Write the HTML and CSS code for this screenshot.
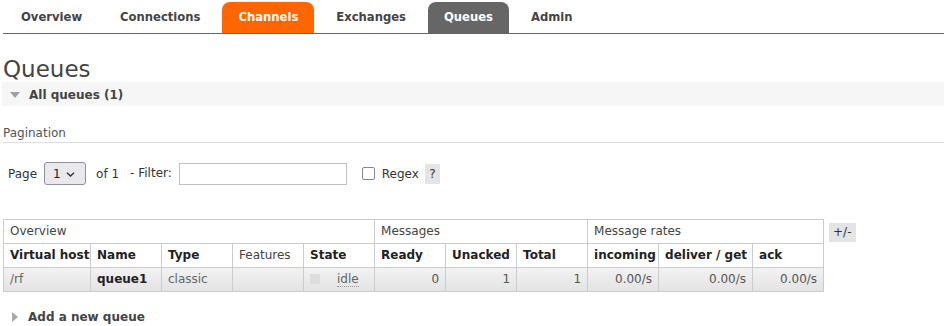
FILE: index.html
```html
<!DOCTYPE html>
<html lang="en">
<head>
    <meta charset="UTF-8">
    <meta name="viewport" content="width=device-width, initial-scale=1.0">
    <title>Queues</title>
    <link rel="stylesheet" href="styles.css">
</head>
<body>
    <ul class="menu">
        <li><a href="#">Overview</a></li>
        <li><a href="#">Connections</a></li>
        <li><a href="#" class="hovered">Channels</a></li>
        <li><a href="#">Exchanges</a></li>
        <li><a href="#" class="selected">Queues</a></li>
        <li><a href="#">Admin</a></li>
    </ul>

    <main class="main">
        <h1>Queues</h1>

        <section class="section">
            <h2 class="section-head"><span class="arrow-down"></span>All queues (1)</h2>

            <h3 class="sub-head">Pagination</h3>
            <form class="filter-row">
                <label class="page-label" for="page">Page</label>
                <span class="select-wrap">
                    <select id="page" class="page-select">
                        <option>1</option>
                    </select>
                    <svg class="chevron" width="9" height="5" viewBox="0 0 9 5">
                        <path d="M1 0.8 L4.5 4 L8 0.8" fill="none" stroke="#333" stroke-width="1.4"/>
                    </svg>
                </span>
                <span class="of-label">of 1</span>
                <label class="filter-label" for="filter">- Filter:</label>
                <input type="text" id="filter" class="filter-input">
                <input type="checkbox" id="regex" class="regex-box">
                <label class="regex-label" for="regex">Regex</label>
                <span class="help">?</span>
            </form>

            <div class="table-wrap">
                <table class="list">
                    <colgroup>
                        <col class="w-vhost">
                        <col class="w-std">
                        <col class="w-std">
                        <col class="w-std">
                        <col class="w-std">
                        <col class="w-std">
                        <col class="w-std">
                        <col class="w-std">
                        <col class="w-std">
                        <col class="w-wide">
                        <col class="w-std">
                    </colgroup>
                    <thead>
                        <tr class="group-row">
                            <th colspan="5">Overview</th>
                            <th colspan="3">Messages</th>
                            <th colspan="3">Message rates</th>
                        </tr>
                        <tr>
                            <th>Virtual host</th>
                            <th>Name</th>
                            <th>Type</th>
                            <th class="plain">Features</th>
                            <th>State</th>
                            <th>Ready</th>
                            <th>Unacked</th>
                            <th>Total</th>
                            <th>incoming</th>
                            <th>deliver / get</th>
                            <th>ack</th>
                        </tr>
                    </thead>
                    <tbody>
                        <tr>
                            <td>/rf</td>
                            <td class="name">queue1</td>
                            <td>classic</td>
                            <td></td>
                            <td><span class="state-dot"></span><abbr class="state">idle</abbr></td>
                            <td class="num">0</td>
                            <td class="num">1</td>
                            <td class="num">1</td>
                            <td class="num">0.00/s</td>
                            <td class="num">0.00/s</td>
                            <td class="num">0.00/s</td>
                        </tr>
                    </tbody>
                </table>
                <span class="toggle">+/-</span>
            </div>
        </section>

        <h2 class="section-closed"><span class="arrow-right"></span>Add a new queue</h2>
    </main>
</body>
</html>
```

FILE: styles.css
```css
* {
    box-sizing: border-box;
}

body {
    margin: 0;
    font-family: "DejaVu Sans", Verdana, sans-serif;
    font-size: 12px;
    color: #484848;
}

/* top tabs */
.menu {
    display: flex;
    gap: 6px;
    list-style: none;
    margin: 0 0 0 3px;
    padding: 2px 0 0 2px;
    border-bottom: 1px solid #666;
}

.menu a {
    display: block;
    padding: 0 16px;
    line-height: 31px;
    font-size: 11.6px;
    font-weight: bold;
    color: #444;
    text-decoration: none;
    border-radius: 8px 8px 0 0;
}

.menu a.hovered {
    background-color: #f60;
    color: #fff;
}

.menu a.selected {
    background-color: #666;
    color: #fff;
}

.main {
    padding-left: 3px;
}

h1 {
    margin: 22px 0 0 0;
    font-size: 23px;
    line-height: 26px;
    font-weight: normal;
    color: #444;
}

.section-head {
    display: flex;
    align-items: center;
    margin: 0 0 0 -1px;
    padding-top: 1px;
    height: 24px;
    font-size: 12px;
    font-weight: bold;
    color: #444;
    background-color: #f6f6f6;
}

.arrow-down {
    width: 0;
    height: 0;
    margin: 0 9px 0 8px;
    border-left: 5.5px solid transparent;
    border-right: 5.5px solid transparent;
    border-top: 6px solid #a0a0a0;
}

.sub-head {
    margin: 20px 0 0 0;
    padding-bottom: 2px;
    font-size: 12px;
    line-height: 14px;
    font-weight: normal;
    color: #555;
    border-bottom: 1px solid #ddd;
}

/* pagination / filter row */
.filter-row {
    display: flex;
    align-items: center;
    margin: 19px 0 0 5px;
    height: 23px;
    color: #333;
}

.select-wrap {
    position: relative;
    margin-left: 7px;
}

.page-select {
    appearance: none;
    display: block;
    width: 42px;
    height: 23px;
    padding: 0 0 0 8px;
    font-family: inherit;
    font-size: 12px;
    color: #222;
    background-color: #e9e9ed;
    border: 1px solid #8f8f9d;
    border-radius: 3px;
}

.chevron {
    position: absolute;
    left: 22px;
    top: 10px;
    pointer-events: none;
}

.of-label {
    margin-left: 10px;
}

.filter-label {
    margin: -2px 0 0 11px;
}

.filter-input {
    width: 168px;
    height: 22px;
    margin: 0 0 0 7px;
    border: 1px solid #c0c0c0;
    font-family: inherit;
    font-size: 12px;
}

.regex-box {
    appearance: none;
    width: 13px;
    height: 13px;
    margin: 0 0 0 15px;
    border: 1.5px solid #85858f;
    border-radius: 2px;
    background-color: #fff;
}

.regex-label {
    margin-left: 7px;
}

.help {
    margin-left: 6px;
    width: 15px;
    height: 20px;
    line-height: 20px;
    text-align: center;
    background-color: #e4e4e4;
    color: #333;
}

/* queues table */
.table-wrap {
    display: flex;
    align-items: flex-start;
    margin-top: 34px;
}

.list {
    border-collapse: collapse;
    table-layout: fixed;
    width: 821px;
}

.w-vhost {
    width: 87px;
}

.w-std {
    width: 71px;
}

.w-wide {
    width: 94px;
}

.list th,
.list td {
    padding: 0 6px;
    line-height: 23px;
    border: 1px solid #ccc;
    text-align: left;
    white-space: nowrap;
    overflow: hidden;
}

.list th {
    color: #222;
    font-weight: bold;
}

.list .group-row th,
.list th.plain {
    font-weight: normal;
    color: #444;
}

.list tbody tr {
    background: linear-gradient(#f2f2f2, #e3e3e3);
}

.list td {
    color: #666;
}

.list td.name {
    font-weight: bold;
    color: #222;
}

.list td.num {
    text-align: right;
    color: #555;
}

.state-dot {
    display: inline-block;
    width: 10px;
    height: 10px;
    vertical-align: -1px;
    background-color: #ddd;
}

.state {
    margin-left: 17px;
    text-decoration: none;
    color: #666;
    border-bottom: 1px dotted #999;
    line-height: 14px;
}

.toggle {
    margin: 4px 0 0 5px;
    padding: 0 4px;
    line-height: 19px;
    background-color: #e4e4e4;
    color: #333;
}

.section-closed {
    display: flex;
    align-items: center;
    margin: 18px 0 0 0;
    font-size: 12px;
    line-height: 14px;
    font-weight: bold;
    color: #444;
}

.arrow-right {
    width: 0;
    height: 0;
    margin: 0 10px 0 9px;
    border-top: 5px solid transparent;
    border-bottom: 5px solid transparent;
    border-left: 6px solid #a8a8a8;
}
```
